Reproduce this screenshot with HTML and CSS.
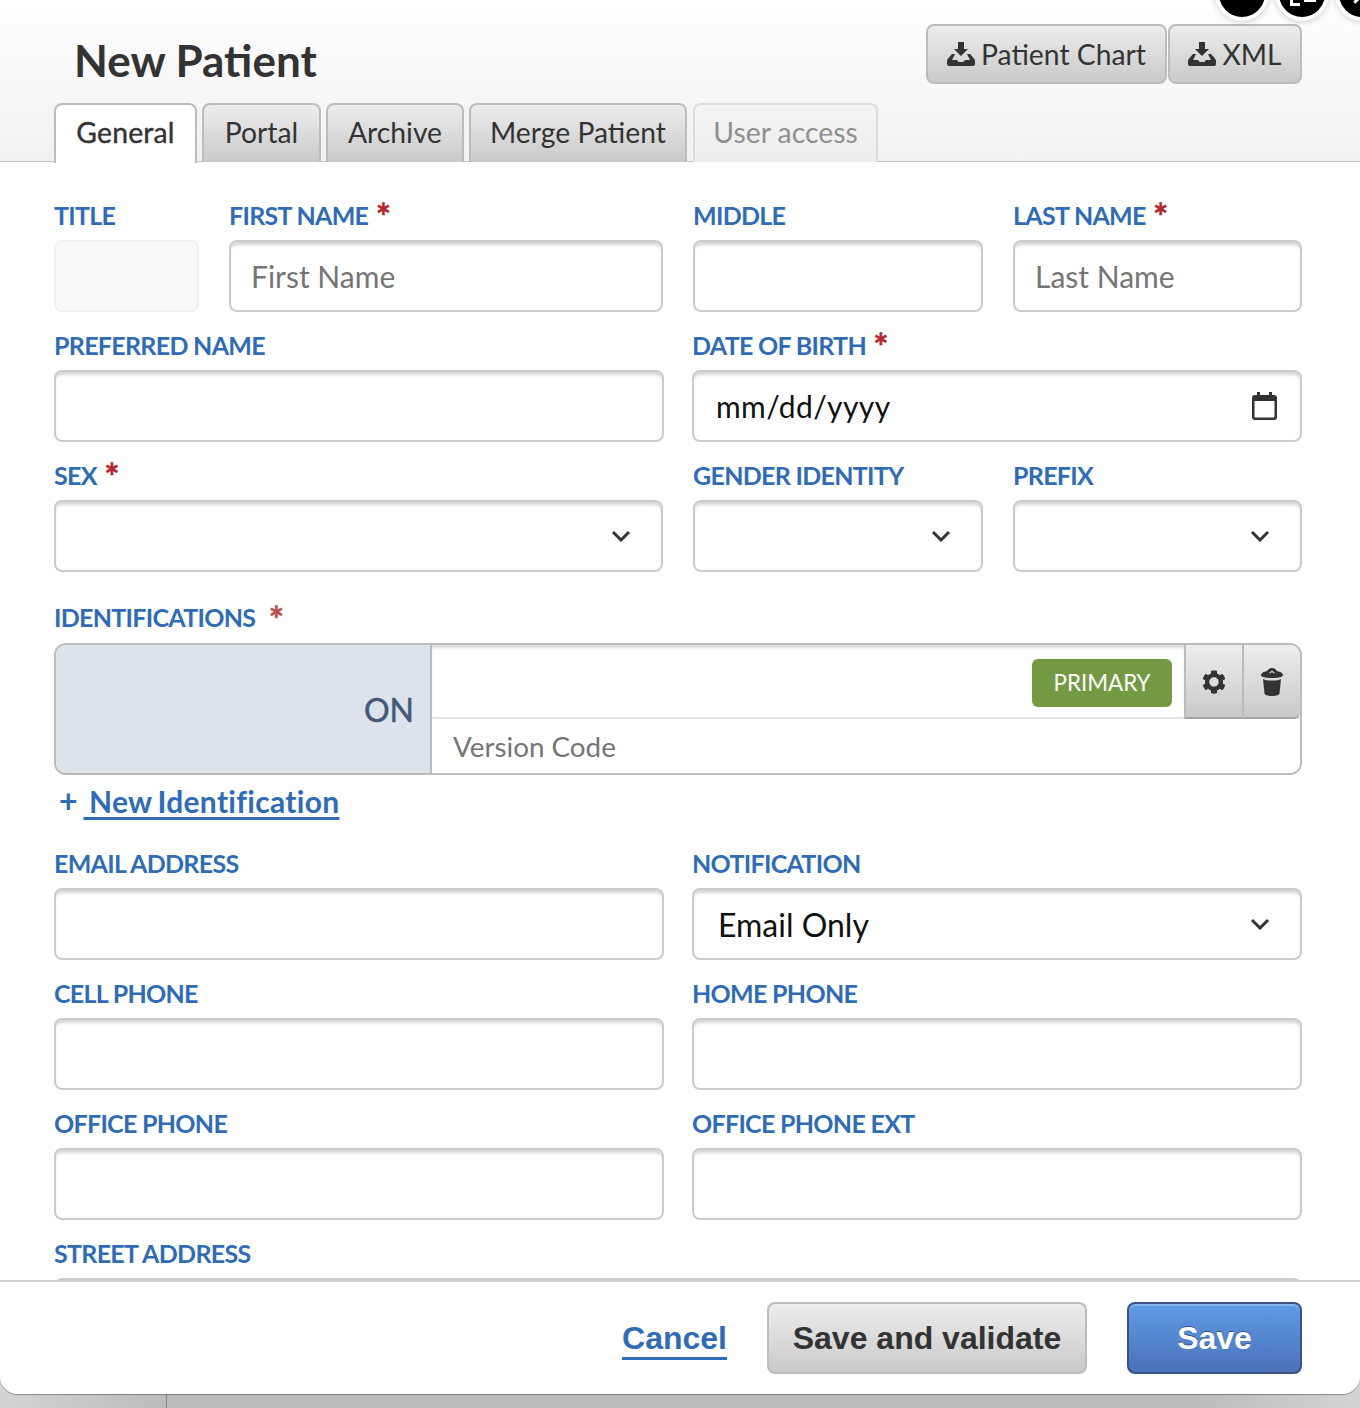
FILE: index.html
```html
<!DOCTYPE html>
<html lang="en">
<head>
    <meta charset="UTF-8">
    <meta name="viewport" content="width=device-width, initial-scale=1.0">
    <title>New Patient</title>
    <link rel="stylesheet" href="styles.css">
</head>
<body>
    <div class="backdrop">
        <div class="sidebar"></div>
    </div>

    <div class="modal">
        <header class="modal-head">
            <div class="head-top">
                <h1 class="title">New Patient</h1>
                <div class="head-actions">
                    <button class="btn-head">
                        <svg class="ico-download" viewBox="0 0 28 24"><path d="M11 0h6v7h4l-7 7-7-7h4z"/><path d="M0 19c0-1 .5-2 1.500-3L5 12h3l-3 6h5l1.500 2h5l1.500-2h5l-3-6h3l3.500 4c1 1 1.500 2 1.500 3v3a2 2 0 0 1-2 2H2a2 2 0 0 1-2-2z"/></svg>
                        Patient Chart
                    </button>
                    <button class="btn-head btn-xml">
                        <svg class="ico-download" viewBox="0 0 28 24"><path d="M11 0h6v7h4l-7 7-7-7h4z"/><path d="M0 19c0-1 .5-2 1.500-3L5 12h3l-3 6h5l1.500 2h5l1.500-2h5l-3-6h3l3.500 4c1 1 1.500 2 1.500 3v3a2 2 0 0 1-2 2H2a2 2 0 0 1-2-2z"/></svg>
                        XML
                    </button>
                </div>
            </div>
            <nav class="tabs">
                <a class="tab tab-active">General</a>
                <a class="tab">Portal</a>
                <a class="tab">Archive</a>
                <a class="tab">Merge Patient</a>
                <a class="tab tab-disabled">User access</a>
            </nav>
        </header>

        <main class="form">
            <div class="row row-name">
                <div class="field"><label>TITLE</label><input class="input input-disabled" disabled></div>
                <div class="field"><label>FIRST NAME <span class="req">*</span></label><input class="input" placeholder="First Name"></div>
                <div class="field"><label>MIDDLE</label><input class="input"></div>
                <div class="field"><label>LAST NAME <span class="req">*</span></label><input class="input" placeholder="Last Name"></div>
            </div>
            <div class="row row-half">
                <div class="field"><label>PREFERRED NAME</label><input class="input"></div>
                <div class="field">
                    <label>DATE OF BIRTH <span class="req">*</span></label>
                    <div class="input control control-date">
                        <span>mm/dd/yyyy</span>
                        <svg class="ico-cal" viewBox="0 0 25 28"><path d="M5 0h3v3h9V0h3v3h2a3 3 0 0 1 3 3v19a3 3 0 0 1-3 3H3a3 3 0 0 1-3-3V6a3 3 0 0 1 3-3h2zM2.500 9v15.500a1 1 0 0 0 1 1h18a1 1 0 0 0 1-1V9z" fill-rule="evenodd"/></svg>
                    </div>
                </div>
            </div>
            <div class="row row-three">
                <div class="field">
                    <label>SEX <span class="req">*</span></label>
                    <div class="input control"><span></span><svg class="ico-chev" viewBox="0 0 20 12"><path d="M2 2l8 8 8-8"/></svg></div>
                </div>
                <div class="field">
                    <label>GENDER IDENTITY</label>
                    <div class="input control"><span></span><svg class="ico-chev" viewBox="0 0 20 12"><path d="M2 2l8 8 8-8"/></svg></div>
                </div>
                <div class="field">
                    <label>PREFIX</label>
                    <div class="input control"><span></span><svg class="ico-chev" viewBox="0 0 20 12"><path d="M2 2l8 8 8-8"/></svg></div>
                </div>
            </div>

            <section class="ident">
                <label>IDENTIFICATIONS <span class="req req-soft">*</span></label>
                <div class="ident-box">
                    <div class="ident-side">ON</div>
                    <div class="ident-main">
                        <div class="ident-top">
                            <div class="ident-value"><span class="badge">PRIMARY</span></div>
                            <button class="btn-tool">
                                <svg class="ico-cog" viewBox="0 0 512 512"><path d="M487.400 315.700l-42.600-24.600c4.300-23.200 4.300-47 0-70.200l42.600-24.600c4.900-2.800 7.100-8.600 5.500-14-11.100-35.600-30-67.800-54.700-94.600-3.800-4.100-10-5.100-14.800-2.300L380.800 110c-17.900-15.400-38.500-27.300-60.800-35.100V25.800c0-5.600-3.900-10.500-9.400-11.700-36.700-8.200-74.300-7.800-109.200 0-5.500 1.200-9.400 6.100-9.400 11.700V75c-22.200 7.900-42.800 19.800-60.800 35.100L88.700 85.500c-4.900-2.800-11-1.900-14.800 2.300-24.700 26.700-43.600 58.900-54.700 94.600-1.700 5.400.6 11.200 5.500 14L67.300 221c-4.300 23.200-4.300 47 0 70.200l-42.600 24.600c-4.900 2.800-7.100 8.600-5.500 14 11.100 35.600 30 67.800 54.700 94.600 3.800 4.100 10 5.100 14.800 2.300l42.600-24.600c17.900 15.400 38.500 27.300 60.800 35.100v49.200c0 5.600 3.900 10.500 9.400 11.700 36.700 8.200 74.300 7.800 109.200 0 5.500-1.200 9.400-6.100 9.400-11.700v-49.200c22.200-7.900 42.800-19.800 60.800-35.100l42.600 24.600c4.900 2.800 11 1.900 14.800-2.300 24.700-26.700 43.600-58.900 54.700-94.600 1.500-5.500-.7-11.300-5.600-14.100zM256 356c-55 0-100-45-100-100s45-100 100-100 100 45 100 100-45 100-100 100z"/></svg>
                            </button>
                            <button class="btn-tool btn-tool-last">
                                <svg class="ico-trash" viewBox="0 0 22 28"><path d="M11 0C8.500 0 7 1.500 6 3 2.500 3.800 0 5 0 7c0 1.800 4 3 11 3s11-1.200 11-3c0-2-2.500-3.200-6-4-1-1.500-2.500-3-5-3zm0 2.500l3 2.500-1 .5L11 4 9 5.500 8 5z" fill-rule="evenodd"/><path d="M2 11c2 1 5 1.500 9 1.500s7-.5 9-1.500l-1.500 14.500c-.2 1.500-3 2.500-7.500 2.500s-7.300-1-7.500-2.500z"/></svg>
                            </button>
                        </div>
                        <input class="ident-code" placeholder="Version Code">
                    </div>
                </div>
                <div class="ident-add"><span class="plus">+</span> <a class="add-link"> New Identification</a></div>
            </section>

            <div class="row row-half">
                <div class="field"><label>EMAIL ADDRESS</label><input class="input"></div>
                <div class="field">
                    <label>NOTIFICATION</label>
                    <div class="input control control-select"><span>Email Only</span><svg class="ico-chev" viewBox="0 0 20 12"><path d="M2 2l8 8 8-8"/></svg></div>
                </div>
            </div>
            <div class="row row-half">
                <div class="field"><label>CELL PHONE</label><input class="input"></div>
                <div class="field"><label>HOME PHONE</label><input class="input"></div>
            </div>
            <div class="row row-half">
                <div class="field"><label>OFFICE PHONE</label><input class="input"></div>
                <div class="field"><label>OFFICE PHONE EXT</label><input class="input"></div>
            </div>
            <div class="row">
                <div class="field"><label>STREET ADDRESS</label><input class="input"></div>
            </div>
        </main>

        <footer class="modal-foot">
            <a class="cancel">Cancel</a>
            <button class="btn-foot">Save and validate</button>
            <button class="btn-foot btn-save">Save</button>
        </footer>
    </div>

    <!-- floating round controls from the app behind, cut off by the window -->
    <div class="float-btn float-one"></div>
    <div class="float-btn float-two"><span class="float-mark"></span></div>
    <div class="float-btn float-three"><span class="float-arrow"></span></div>
</body>
</html>
```

FILE: styles.css
```css
* {
    box-sizing: border-box;
}
html, body {
    height: 1408px;
    overflow: hidden;
}
body {
    margin: 0;
    position: relative;
    font-family: Lato, "Open Sans", sans-serif;
    color: #333;
}
.backdrop {
    height: 100%;
    background: linear-gradient(90deg, #d4d4d4, #bcbcbc 12%, #bcbcbc 88%, #d4d4d4);
}
.sidebar {
    width: 167px;
    height: 100%;
    border-right: 1px solid #888;
}
.modal {
    position: absolute;
    top: 0;
    left: 0;
    width: 100%;
    height: 1394px;
    display: flex;
    flex-direction: column;
    overflow: hidden;
    background-color: #fff;
    border-radius: 0 0 18px 18px;
    box-shadow: 0 1px 1px rgba(0,0,0,0.35);
}

/* header */
.modal-head {
    height: 162px;
    flex-shrink: 0;
    background: linear-gradient(#fff, #f1f1f1);
    border-bottom: 1px solid #c4c4c4;
    padding-left: 54px;
}
.head-top {
    height: 103px;
    display: flex;
    justify-content: space-between;
    align-items: flex-start;
    padding: 24px 58px 0 20px;
}
.title {
    margin: 9px 0 0;
    font-size: 44px;
    line-height: 54px;
    font-weight: 700;
}
.head-actions {
    display: flex;
    gap: 1px;
}
.btn-head {
    height: 60px;
    width: 241px;
    padding: 0;
    display: flex;
    justify-content: center;
    align-items: center;
    gap: 6px;
    font-family: inherit;
    font-size: 28.3px;
    color: #333;
    background: linear-gradient(#ededed, #c9c9c9);
    border: 2px solid #bcbcbc;
    border-radius: 8px;
}
.btn-xml {
    width: 134px;
}
.ico-download {
    width: 28px;
    height: 24px;
    fill: #333;
}
.tabs {
    display: grid;
    grid-template-columns: 143px 119px 138px 218px 186px;
    justify-content: start;
    gap: 5px;
    height: 59px;
}
.tab {
    height: 59px;
    padding-bottom: 4px;
    display: flex;
    justify-content: center;
    align-items: center;
    font-size: 28.3px;
    white-space: nowrap;
    color: #333;
    background: linear-gradient(#ededed, #c9c9c9);
    border: 2px solid #bcbcbc;
    border-bottom: 0;
    border-radius: 8px 8px 0 0;
}
.tab-active {
    letter-spacing: 0.2px;
    -webkit-text-stroke: 0.4px #333;
    background: #fff;
    height: 60px;
}
.tab-disabled {
    color: #8f8f8f;
    background: linear-gradient(#f5f5f5, #ececec);
    border-color: #dcdcdc;
    margin-left: 1px;
}

/* form */
.form {
    flex: 1;
    overflow: hidden;
    padding: 34px 58px 0 54px;
}
.row {
    display: grid;
    grid-template-columns: 1fr;
    column-gap: 30px;
    margin-bottom: 14px;
}
.row-name {
    grid-template-columns: 145px 434px 290px 289px;
}
.row-half {
    grid-template-columns: 610px 610px;
    column-gap: 28px;
}
.row-three {
    grid-template-columns: 609px 290px 289px;
    margin-bottom: 26px;
}
label {
    display: block;
    height: 44px;
    line-height: 38px;
    font-size: 25px;
    font-weight: 700;
    letter-spacing: -0.7px;
    color: #2f6cb5;
    white-space: nowrap;
}
.req {
    color: #b0272d;
    font-size: 36px;
    line-height: 0;
    margin-left: 2px;
    vertical-align: -5px;
    -webkit-text-stroke: 0.5px #b0272d;
}
.req-soft {
    margin-left: 8px;
    color: #bb4f4b;
    vertical-align: -6px;
    -webkit-text-stroke: 0.5px #bb4f4b;
}
.input {
    display: block;
    width: 100%;
    height: 72px;
    padding: 0 20px;
    font-family: inherit;
    font-size: 30px;
    color: #111;
    background-color: #fff;
    border: 2px solid #cbcbcb;
    border-radius: 8px;
    box-shadow: inset 0 4px 3px -1px rgba(0,0,0,0.16);
    outline: none;
}
.input::placeholder, .ident-code::placeholder {
    color: #757575;
    opacity: 1;
}
.input-disabled {
    background-color: #f9f9f9;
    border-color: #f0f0f0;
    box-shadow: none;
}
.control {
    display: flex;
    justify-content: space-between;
    align-items: center;
    padding: 0 30px 0 22px;
}
.control-date {
    padding-right: 23px;
    letter-spacing: 0.4px;
}
.control-select {
    font-size: 32px;
    padding-left: 24px;
}
.ico-cal {
    width: 25px;
    height: 28px;
    fill: #333;
}
.ico-chev {
    width: 20px;
    height: 12px;
    fill: none;
    stroke: #333;
    stroke-width: 3;
}

/* identifications */
.ident {
    margin-bottom: 21px;
}
.ident label {
    height: 45px;
}
.ident-box {
    height: 132px;
    display: flex;
    overflow: hidden;
    background-color: #fff;
    border: 2px solid #bbb;
    border-radius: 12px;
}
.ident-side {
    width: 376px;
    flex-shrink: 0;
    display: flex;
    justify-content: flex-end;
    align-items: center;
    padding: 1px 16px 0 0;
    font-size: 32px;
    -webkit-text-stroke: 0.5px #44597a;
    color: #44597a;
    background-color: #dde3ea;
    border-right: 2px solid #bbb;
}
.ident-main {
    flex: 1;
    display: flex;
    flex-direction: column;
}
.ident-top {
    height: 74px;
    display: flex;
    border-bottom: 2px solid #e6e6e6;
}
.ident-value {
    flex: 1;
    display: flex;
    justify-content: flex-end;
    align-items: center;
    padding: 3px 12px 0 0;
    box-shadow: inset 0 4px 3px -1px rgba(0,0,0,0.14);
}
.badge {
    width: 140px;
    height: 48px;
    display: flex;
    justify-content: center;
    align-items: center;
    font-size: 22.4px;
    color: #fff;
    background-color: #739a43;
    border-radius: 6px;
}
.btn-tool {
    width: 58px;
    height: 74px;
    padding: 2px 0 0;
    display: flex;
    justify-content: center;
    align-items: center;
    background: linear-gradient(#ededed, #c9c9c9);
    border: 0;
    border-left: 2px solid #bbb;
    border-bottom: 2px solid #a5a5a5;
}
.btn-tool-last {
    border-bottom-right-radius: 6px;
}
.ico-cog {
    width: 24px;
    height: 24px;
    fill: #333;
}
.ico-trash {
    width: 22px;
    height: 28px;
    fill: #333;
}
.ident-code {
    flex: 1;
    min-height: 0;
    padding: 0 21px;
    font-family: inherit;
    font-size: 27.8px;
    border: 0;
    outline: none;
}
.ident-add {
    height: 41px;
    margin-top: 7px;
    padding-left: 5px;
    font-size: 30px;
    font-weight: 700;
    line-height: 38px;
    letter-spacing: 0.3px;
    word-spacing: -2px;
    color: #2f6cb5;
    white-space: pre;
}
.plus {
    font-size: 32px;
}
.add-link {
    text-decoration: underline;
    text-decoration-thickness: 3px;
    text-underline-offset: 4px;
}

/* footer */
.modal-foot {
    height: 114px;
    flex-shrink: 0;
    display: flex;
    justify-content: flex-end;
    align-items: center;
    gap: 40px;
    padding: 0 58px 0 0;
    background-color: #fff;
    border-top: 2px solid #d0d0d0;
    font-family: "Liberation Sans", Arial, sans-serif;
}
.cancel {
    font-size: 32px;
    font-weight: 700;
    color: #2f6cb5;
    text-decoration: underline;
    text-decoration-thickness: 3px;
    text-underline-offset: 8px;
}
.btn-foot {
    width: 320px;
    height: 72px;
    padding: 0;
    font-family: inherit;
    font-size: 32px;
    font-weight: 700;
    color: #333;
    background: linear-gradient(#ededed, #c9c9c9);
    border: 2px solid #bcbcbc;
    border-radius: 8px;
}
.btn-save {
    width: 175px;
    color: #fff;
    background: linear-gradient(#5f9be6, #4a72b9);
    border-color: #3a5383;
    box-shadow: inset 0 2px 0 rgba(255,255,255,0.25);
    text-shadow: 0 -1px 0 #3a5383;
}

/* round controls over the top edge */
.float-btn {
    position: absolute;
    top: -33px;
    width: 54px;
    height: 54px;
    background-color: #000;
    border: 4px solid #fff;
    border-radius: 50%;
    box-shadow: 0 1px 6px rgba(0,0,0,0.2);
}
.float-one {
    left: 1215px;
}
.float-two {
    left: 1275px;
}
.float-three {
    left: 1335px;
}
.float-mark {
    position: absolute;
    left: 11px;
    top: 23px;
    width: 10px;
    height: 12px;
    border-left: 3px solid #fff;
    border-bottom: 3px solid #fff;
}
.float-mark::after {
    content: "";
    position: absolute;
    left: 11px;
    top: 6px;
    width: 12px;
    height: 2px;
    background-color: #fff;
}
.float-arrow {
    position: absolute;
    left: 14px;
    top: 27px;
    width: 9px;
    height: 3px;
    background-color: #fff;
    transform: rotate(-45deg);
}
```
